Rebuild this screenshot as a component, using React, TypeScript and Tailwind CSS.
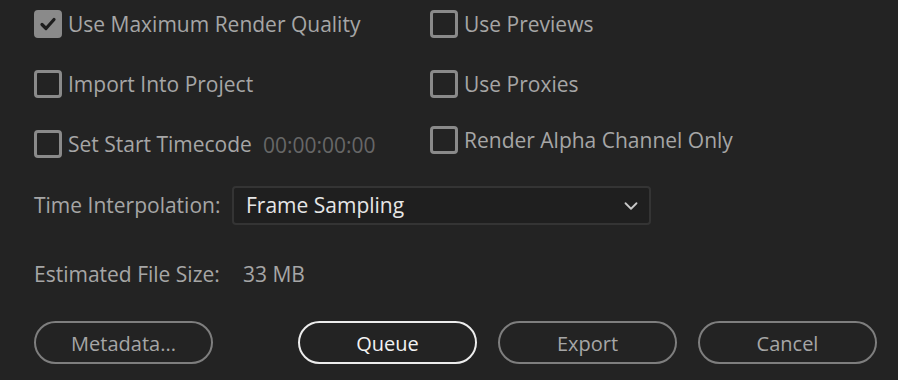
import { ChevronDown } from 'lucide-react';

const font = { fontFamily: '"Open Sans", "Noto Sans", sans-serif' };

function Check({ label, checked = false, extra }: { label: string; checked?: boolean; extra?: string }) {
    return (
        <div className="flex items-center h-[40px]">
            <div className={`w-[28px] h-[28px] rounded-[4px] border-[3px] border-[#8a8a8a] flex items-center justify-center ${checked ? 'bg-[#8a8a8a]' : ''}`}>
                {checked && (
                    <svg width="20" height="20" viewBox="0 0 20 20">
                        <path d="M4 10.5 L8 14.5 L16 5.5" fill="none" stroke="#1d1d1d" strokeWidth="3.2" strokeLinecap="round" strokeLinejoin="round" />
                    </svg>
                )}
            </div>
            <span className="ml-[6px] mt-[2px] text-[21px] text-[#a6a6a6]">{label}</span>
            {extra && <span className="ml-[11px] mt-[4px] text-[21px] text-[#676767]">{extra}</span>}
        </div>
    );
}

export default function App() {
    return (
        <div className="w-[898px] h-[380px] bg-[#232323] pl-[34px] pt-[4px] overflow-hidden" style={font}>
            {/* Checkbox grid */}
            <div className="flex">
                <div className="w-[396px] flex flex-col gap-[20px]">
                    <Check label="Use Maximum Render Quality" checked />
                    <Check label="Import Into Project" />
                    <Check label="Set Start Timecode" extra="00:00:00:00" />
                </div>
                <div className="flex flex-col gap-[20px]">
                    <Check label="Use Previews" />
                    <Check label="Use Proxies" />
                    <div className="-mt-[4px]">
                        <Check label="Render Alpha Channel Only" />
                    </div>
                </div>
            </div>

            {/* Time interpolation */}
            <div className="flex items-center mt-[22px]">
                <span className="text-[21px] text-[#a6a6a6] w-[198px]">Time Interpolation:</span>
                <div className="w-[419px] h-[39px] rounded-[4px] border-2 border-[#343434] bg-[#1f1f1f] flex items-center justify-between pl-[12px] pr-[7px]">
                    <span className="text-[21px] text-[#e6e6e6]">Frame Sampling</span>
                    <ChevronDown size={22} strokeWidth={2} className="text-[#c8c8c8]" />
                </div>
            </div>

            {/* File size */}
            <div className="flex items-center mt-[30px] h-[40px]">
                <span className="text-[21px] text-[#a6a6a6] w-[209px]">Estimated File Size:</span>
                <span className="text-[21px] text-[#a6a6a6]">33 MB</span>
            </div>

            {/* Buttons */}
            <div className="flex mt-[26px]">
                <button className="w-[179px] h-[43px] pt-[2px] rounded-full border-2 border-[#7e7e7e] text-[20px] text-[#a6a6a6]">Metadata...</button>
                <button className="ml-[85px] w-[179px] h-[43px] pt-[2px] rounded-full border-2 border-[#ececec] text-[20px] text-[#f2f2f2]">Queue</button>
                <button className="ml-[21px] w-[179px] h-[43px] pt-[2px] rounded-full border-2 border-[#7e7e7e] text-[20px] text-[#a6a6a6]">Export</button>
                <button className="ml-[21px] w-[179px] h-[43px] pt-[2px] rounded-full border-2 border-[#7e7e7e] text-[20px] text-[#a6a6a6]">Cancel</button>
            </div>
        </div>
    );
}
